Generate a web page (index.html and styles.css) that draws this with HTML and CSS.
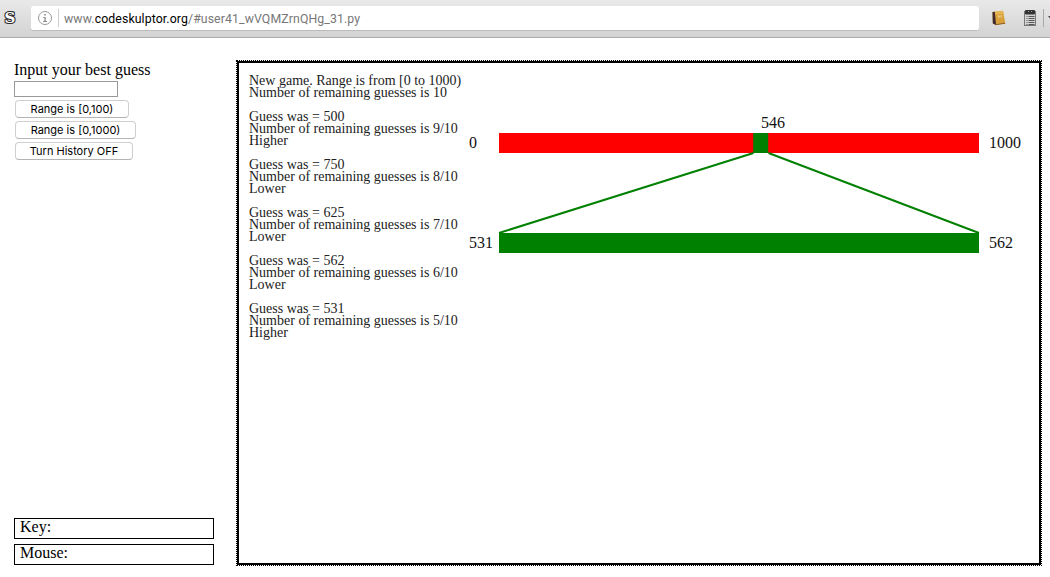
FILE: index.html
```html
<!DOCTYPE html>
<html lang="en">
<head>
<meta charset="utf-8">
<title>CodeSkulptor</title>
<link rel="stylesheet" href="styles.css">
</head>
<body>
<header class="toolbar">
  <svg class="logo" width="16" height="18" viewBox="0 0 16 18"><text class="logo-letter" x="4.500" y="14">S</text></svg>
  <div class="address">
    <svg class="info" width="16" height="16" viewBox="0 0 16 16"><circle cx="8" cy="8" r="6.500" fill="none" stroke="#999"/><path d="M7.200 4h1.600v1.600H7.200zM6.300 7h2.400v4h1.300v1H6.100v-1h1.300V8H6.300z" fill="#8b8b8b"/></svg>
    <span class="divider"></span>
    <span class="url">www.<b>codeskulptor.org</b>/#user41_wVQMZrnQHg_31.py</span>
  </div>
  <svg class="tools" width="70" height="37" viewBox="0 0 70 37">
    <path d="M12.500 12l10.500-1.200 2.300 12.500-9.800 1.700-2.700-1.500z" fill="#d9a03a"/>
    <path d="M12.500 12l2.300-.3 1.300 13.300-3.300-1.500z" fill="#3f2a30"/>
    <path d="M15 11.700l8-.9.600 3-8.300.8z" fill="#e6b650"/>
    <path d="M16 24.700l9.200-1.500" stroke="#8a5a22"/>
    <path d="M18.300 15.500v2m1.500-2v2m1.500-2.300v2" stroke="#f6e2b0" stroke-width=".8" fill="none"/>
    <rect x="44.500" y="11.500" width="11" height="14" fill="#d5d5d5" stroke="#777"/>
    <rect x="45" y="10" width="10" height="4.500" rx="1" fill="#333"/>
    <path d="M48 11.500h1m2 0h1" stroke="#999"/>
    <path d="M46.500 16.500h1m1 0h6m-8 2h1m1 0h6m-8 2h1m1 0h6m-8 2h1m1 0h6m-8 2h1m1 0h6" stroke="#555"/>
    <path d="M63.500 9v18" stroke="#aaa"/>
    <path d="M68 16h4l-2 2.500z" fill="#444"/>
  </svg>
</header>
<main class="page">
  <aside class="controls">
    <label class="label" for="guess">Input your best guess</label>
    <input class="guess" id="guess" type="text">
    <button class="button button-small">Range is [0,100)</button>
    <button class="button button-large">Range is [0,1000)</button>
    <button class="button button-history">Turn History OFF</button>
    <div class="status status-key">Key:</div>
    <div class="status">Mouse:</div>
  </aside>
  <section class="frame">
    <div class="canvas">
      <pre class="history">New game. Range is from [0 to 1000)
Number of remaining guesses is 10

Guess was = 500
Number of remaining guesses is 9/10
Higher

Guess was = 750
Number of remaining guesses is 8/10
Lower

Guess was = 625
Number of remaining guesses is 7/10
Lower

Guess was = 562
Number of remaining guesses is 6/10
Lower

Guess was = 531
Number of remaining guesses is 5/10
Higher</pre>
      <svg class="chart" width="570" height="200" viewBox="230 0 570 200">
        <rect x="260" y="70" width="480" height="20" fill="red"/>
        <rect x="514.200" y="70" width="15" height="20" fill="green"/>
        <path d="M514.500 90L260 170M529.500 90L740 170" stroke="green" stroke-width="2"/>
        <rect x="260" y="170" width="480" height="20" fill="green"/>
        <g class="values">
          <text x="230" y="85">0</text>
          <text x="522" y="65">546</text>
          <text x="750" y="85">1000</text>
          <text x="230" y="185">531</text>
          <text x="750" y="185">562</text>
        </g>
      </svg>
    </div>
  </section>
</main>
</body>
</html>
```
FILE: styles.css
```css
* { box-sizing: border-box; }
body {
  margin: 0;
  width: 1050px;
  height: 577px;
  overflow: hidden;
  background: #fff;
  color: #000;
  font-family: "Liberation Serif", serif;
  font-size: 16px;
}
.toolbar {
  display: flex;
  height: 38px;
  border-bottom: 1px solid #aaa;
  background: linear-gradient(#e9e9e9, #d3d3d3);
}
.logo { flex: none; margin: 9px 15px 0 0; }
.logo-letter {
  font: bold 15px "DejaVu Serif", serif;
  fill: #fff;
  stroke: #2c2c2c;
  stroke-width: 2.200px;
  stroke-linejoin: round;
  paint-order: stroke;
}
.address {
  display: flex;
  align-items: center;
  width: 948px;
  height: 25px;
  margin-top: 5.500px;
  padding-left: 6px;
  border-radius: 3px;
  border-bottom: 1px solid #bbb;
  background: #fff;
}
.info { flex: none; }
.divider { width: 1px; height: 18px; margin: 0 5px; background: #ccc; }
.url {
  padding-top: 2px;
  color: #777;
  font: 12.300px/18px Roboto, sans-serif;
  letter-spacing: 0.100px;
}
.url b { color: #000; font-weight: 400; }
.tools { flex: none; margin-left: 1px; }
.page { display: flex; gap: 22px; padding: 22px 0 0 14px; }
.controls {
  display: flex;
  flex-direction: column;
  align-items: flex-start;
  width: 200px;
  height: 505px;
}
.label { height: 21px; line-height: 20px; }
.guess {
  width: 104px;
  height: 16px;
  padding: 0;
  border: 1px solid #999;
  background: #fff;
}
.button {
  height: 18px;
  margin: 3px 0 0 1px;
  padding: 0;
  border: 1px solid #cfcfcf;
  border-bottom-color: #b4b4b4;
  border-radius: 4px;
  background: #fff;
  color: #000;
  font: 11px/16px Inter, sans-serif;
}
.button-small { width: 114px; }
.button-large { width: 121px; }
.button-history { width: 118px; }
.status {
  width: 200px;
  height: 21px;
  padding-left: 5px;
  border: 1px solid #000;
  line-height: 15px;
}
.status-key { margin: auto 0 5px; }
.frame { width: 806px; height: 506px; border: 1px dotted #000; }
.canvas {
  display: flex;
  height: 504px;
  border: 2px solid #000;
}
.history {
  width: 230px;
  margin: 0;
  padding: 12px 0 0 10px;
  font: 14px/12px "Liberation Serif", serif;
  color: #222;
}
.chart { flex: none; }
.values { font-size: 16px; fill: #111; }
```
